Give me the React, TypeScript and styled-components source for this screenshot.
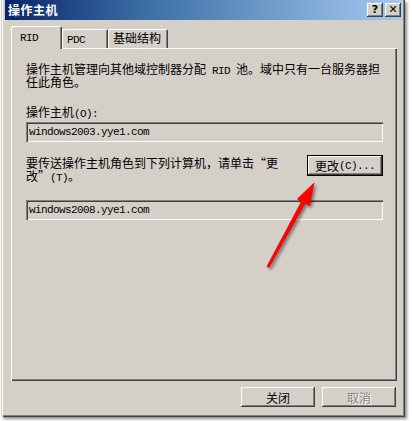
import React from 'react';
import styled, { createGlobalStyle } from 'styled-components';

const GlobalStyle = createGlobalStyle`
  html, body {
    margin: 0;
    padding: 0;
    background: #fff;
  }
  body {
    width: 412px;
    height: 421px;
    overflow: hidden;
    font-family: "Noto Sans CJK SC", sans-serif;
    font-size: 12px;
    color: #000;
  }
`;

const Page = styled.div`
  position: relative;
  width: 412px;
  height: 421px;
  padding-left: 1px;
  box-sizing: border-box;
`;

// classic 3D window frame
const Window = styled.div`
  width: 404px;
  height: 417px;
  box-sizing: border-box;
  background: #d4d0c8;
  padding: 0 3px 3px 4px;
  display: flex;
  flex-direction: column;
  box-shadow:
    inset 1px 0 #d4d0c8,
    inset 2px 0 #fff,
    inset -1px -1px #404040,
    inset -2px -2px #808080,
    2px 2px 3px rgba(0, 0, 0, 0.45);
`;

const TitleBar = styled.div`
  height: 20px;
  flex: none;
  display: flex;
  align-items: center;
  justify-content: space-between;
  padding: 0 1px 0 3px;
  background: linear-gradient(to right, #0a246a 0%, #3a6ea5 35%, #a6caf0 100%);
`;

const TitleText = styled.span`
  color: #fff;
  font-weight: bold;
  font-size: 12px;
  letter-spacing: 0.5px;
  line-height: 20px;
`;

const TitleButtons = styled.div`
  display: flex;
  gap: 2px;
`;

const CaptionButton = styled.div`
  width: 16px;
  height: 14px;
  box-sizing: border-box;
  background: #d4d0c8;
  display: flex;
  align-items: center;
  justify-content: center;
  box-shadow:
    inset -1px -1px #404040,
    inset 1px 1px #fff,
    inset -2px -2px #808080;
  font-family: "DejaVu Sans", sans-serif;
  font-weight: bold;
  font-size: 11px;
  line-height: 14px;
`;

const Body = styled.div`
  flex: 1;
  display: flex;
  flex-direction: column;
  padding: 6px 5px 7px 6px;
`;

const TabStrip = styled.div`
  height: 22px;
  flex: none;
  display: flex;
  align-items: flex-end;
  position: relative;
  z-index: 1;
`;

const Tab = styled.div<{ $active?: boolean; $w: number }>`
  width: ${p => p.$w}px;
  height: ${p => (p.$active ? 23 : 19)}px;
  margin-bottom: ${p => (p.$active ? -1 : 0)}px;
  box-sizing: border-box;
  background: #d4d0c8;
  border-radius: 2px 2px 0 0;
  padding: ${p => (p.$active ? '3px 0 0 9px' : '2px 0 0 5px')};
  line-height: 14px;
  box-shadow:
    inset 1px 1px #fff,
    inset -1px 0 #404040,
    inset -2px 0 #808080;
`;

const Panel = styled.div`
  height: 333px;
  flex: none;
  box-sizing: border-box;
  padding: 14px 14px 0 15px;
  display: flex;
  flex-direction: column;
  box-shadow:
    inset 1px 1px #fff,
    inset -1px -1px #404040,
    inset -2px -2px #808080;
`;

const Text = styled.div<{ $top?: number }>`
  margin-top: ${p => p.$top ?? 0}px;
  font-size: 12px;
`;

const Line = styled.div`
  height: 13px;
  line-height: 13px;
  white-space: nowrap;
`;

const Mono = styled.span`
  font-family: "Liberation Mono", monospace;
  font-size: 11px;
  letter-spacing: -0.6px;
`;

// full-width curly quote cell
const Quote = styled.span<{ $side: 'open' | 'close' }>`
  display: inline-block;
  width: 12px;
  text-align: ${p => (p.$side === 'open' ? 'right' : 'left')};
`;

const Field = styled.div<{ $top: number }>`
  margin-top: ${p => p.$top}px;
  height: 20px;
  box-sizing: border-box;
  padding: 0 0 0 3px;
  display: flex;
  align-items: center;
  background: #d4d0c8;
  box-shadow:
    inset 1px 1px #808080,
    inset 2px 2px #404040,
    inset -1px -1px #fff,
    inset -2px -2px #d4d0c8;
`;

const Row = styled.div`
  margin-top: 13px;
  display: flex;
  justify-content: space-between;
  align-items: flex-start;
`;

const Button = styled.div<{ $default?: boolean; $disabled?: boolean; $w: number; $h: number }>`
  width: ${p => p.$w}px;
  height: ${p => p.$h}px;
  box-sizing: border-box;
  display: flex;
  align-items: center;
  justify-content: center;
  background: #d4d0c8;
  font-size: 12px;
  color: ${p => (p.$disabled ? '#808080' : '#000')};
  text-shadow: ${p => (p.$disabled ? '1px 1px #fff' : 'none')};
  border: ${p => (p.$default ? '1px solid #000' : 'none')};
  box-shadow:
    inset -1px -1px #404040,
    inset 1px 1px #fff,
    inset -2px -2px #808080;
`;

const Footer = styled.div`
  margin-top: 6px;
  padding-right: 1px;
  display: flex;
  justify-content: flex-end;
  gap: 7px;
`;

const ArrowLayer = styled.svg`
  position: absolute;
  left: 0;
  top: 0;
  pointer-events: none;
`;

const App: React.FC = () => {
  return (
    <Page>
      <GlobalStyle />
      <Window>
        <TitleBar>
          <TitleText>操作主机</TitleText>
          <TitleButtons>
            <CaptionButton>?</CaptionButton>
            <CaptionButton>✕</CaptionButton>
          </TitleButtons>
        </TitleBar>
        <Body>
          <TabStrip>
            <Tab $active $w={51}><Mono>RID</Mono></Tab>
            <Tab $w={46}><Mono>PDC</Mono></Tab>
            <Tab $w={60}>基础结构</Tab>
          </TabStrip>
          <Panel>
            <Text>
              <Line>操作主机管理向其他域控制器分配<Mono> RID </Mono>池。域中只有一台服务器担</Line>
              <Line>任此角色。</Line>
            </Text>
            <Text $top={17}>
              <Line>操作主机<Mono>(O):</Mono></Line>
            </Text>
            <Field $top={4}><Mono>windows2003.yye1.com</Mono></Field>
            <Row>
              <Text $top={1}>
                <Line>要传送操作主机角色到下列计算机，请单击<Quote $side="open">“</Quote>更</Line>
                <Line>改<Quote $side="close">”</Quote><Mono>(T)</Mono>。</Line>
              </Text>
              <Button $default $w={76} $h={21}>更改<Mono>(C)...</Mono></Button>
            </Row>
            <Field $top={18}><Mono>windows2008.yye1.com</Mono></Field>
          </Panel>
          <Footer>
            <Button $w={74} $h={20}>关闭</Button>
            <Button $disabled $w={74} $h={20}>取消</Button>
          </Footer>
        </Body>
      </Window>
      <ArrowLayer width={412} height={421} viewBox="0 0 412 421">
        <defs>
          <filter id="arrowShadow" x="-50%" y="-50%" width="200%" height="200%">
            <feDropShadow dx="2" dy="2" stdDeviation="1.5" floodColor="#000" floodOpacity="0.45" />
          </filter>
        </defs>
        <path
          d="M266.9 266.4 L301.6 201.3 L297.3 198.9 L314 183 L309.5 205.7 L305.2 203.3 L269.1 267.6 Z"
          fill="#ff0000"
          stroke="#d00000"
          strokeWidth="0.6"
          strokeLinejoin="round"
          filter="url(#arrowShadow)"
        />
      </ArrowLayer>
    </Page>
  );
};

export default App;
